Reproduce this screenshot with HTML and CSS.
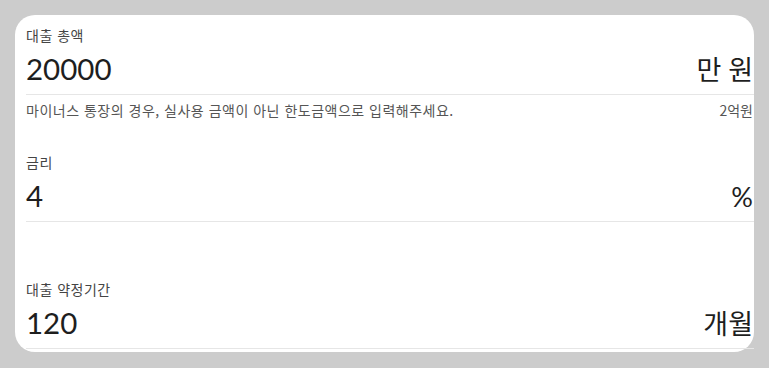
FILE: index.html
```html
<!DOCTYPE html>
<html lang="ko">
<head>
<meta charset="utf-8">
<link rel="stylesheet" href="styles.css">
</head>
<body>
<div class="card">
  <div class="field">
    <div class="label">대출 총액</div>
    <div class="input-row">
      <span class="value">20000</span>
      <span class="unit">만 원</span>
    </div>
    <div class="helper">
      <span>마이너스 통장의 경우, 실사용 금액이 아닌 한도금액으로 입력해주세요.</span>
      <span class="hint">2억원</span>
    </div>
  </div>
  <div class="field">
    <div class="label">금리</div>
    <div class="input-row">
      <span class="value">4</span>
      <span class="unit">%</span>
    </div>
    <div class="helper"></div>
  </div>
  <div class="field">
    <div class="label">대출 약정기간</div>
    <div class="input-row">
      <span class="value">120</span>
      <span class="unit">개월</span>
    </div>
  </div>
</div>
</body>
</html>
```

FILE: styles.css
```css
html, body {
  margin: 0;
  padding: 0;
}
body {
  background: #cccccc;
  padding: 15px;
  font-family: Lato, "Noto Sans CJK KR", sans-serif;
}
.card {
  box-sizing: border-box;
  width: 739px;
  height: 337px;
  background: #ffffff;
  border-radius: 20px;
  padding: 10px 0 0 11px;
}
.field {
  display: flex;
  flex-direction: column;
}
.label {
  height: 20px;
  line-height: 20px;
  font-size: 14px;
  letter-spacing: 0.5px;
  color: #444444;
  font-family: "Noto Sans CJK KR", sans-serif;
}
.input-row {
  display: flex;
  justify-content: space-between;
  align-items: baseline;
  height: 47px;
  line-height: 47px;
  padding-bottom: 2px;
  border-bottom: 1px solid #e6e6e6;
  color: #1e1e1e;
}
.value {
  font-size: 29.5px;
  font-family: Lato, sans-serif;
}
.unit {
  font-size: 27px;
  font-family: Lato, "Noto Sans CJK KR", sans-serif;
  padding-right: 1px;
}
.helper {
  display: flex;
  justify-content: space-between;
  height: 20px;
  line-height: 20px;
  margin: 5px 0 32px;
  font-size: 14px;
  letter-spacing: 0.5px;
  color: #555555;
  font-family: "Noto Sans CJK KR", sans-serif;
}
.hint {
  padding-right: 1px;
  letter-spacing: 0;
}
```
